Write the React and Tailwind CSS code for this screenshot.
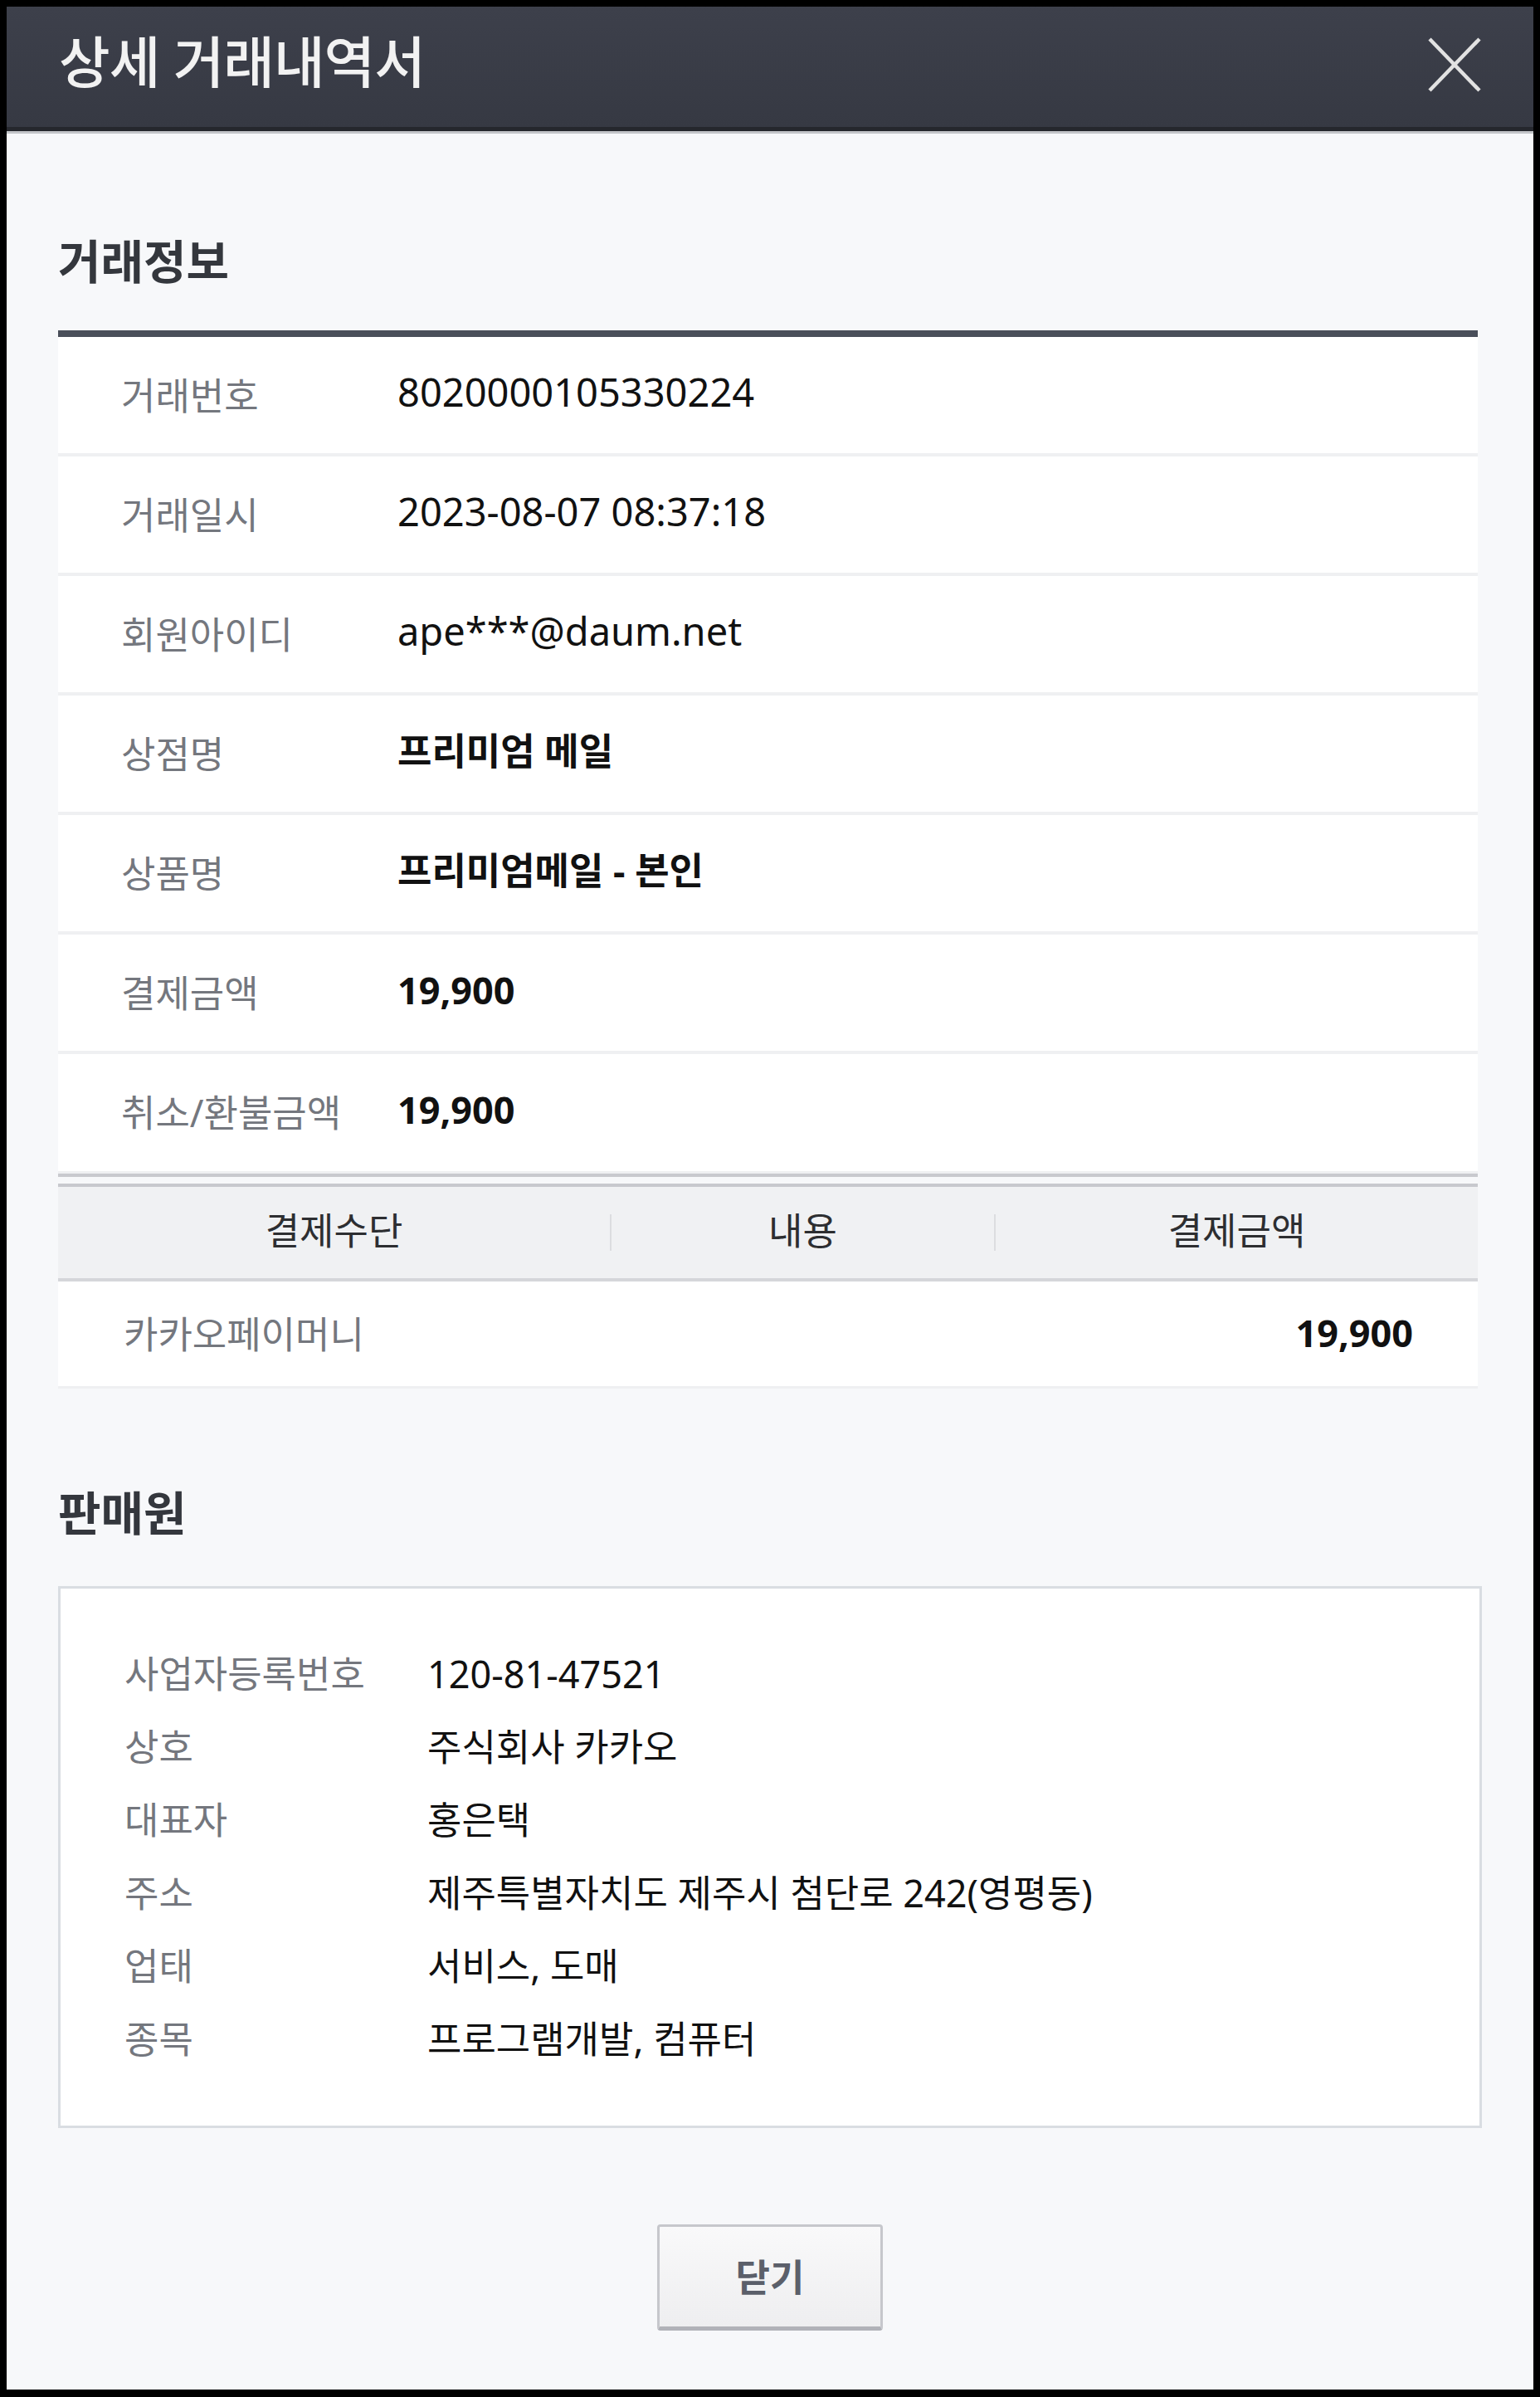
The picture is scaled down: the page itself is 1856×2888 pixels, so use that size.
import React from "react";

const info = [
  { label: "거래번호", value: "8020000105330224", kind: "latin" },
  { label: "거래일시", value: "2023-08-07 08:37:18", kind: "latin" },
  { label: "회원아이디", value: "ape***@daum.net", kind: "latin" },
  { label: "상점명", value: "프리미엄 메일", kind: "kbold" },
  { label: "상품명", value: "프리미엄메일 - 본인", kind: "kbold" },
  { label: "결제금액", value: "19,900", kind: "num" },
  { label: "취소/환불금액", value: "19,900", kind: "num" },
];

const seller = [
  ["사업자등록번호", "120-81-47521"],
  ["상호", "주식회사 카카오"],
  ["대표자", "홍은택"],
  ["주소", "제주특별자치도 제주시 첨단로 242(영평동)"],
  ["업태", "서비스, 도매"],
  ["종목", "프로그램개발, 컴퓨터"],
];

function valueClass(kind) {
  if (kind === "latin") return "text-[47px] text-[#111111]";
  if (kind === "kbold") return "text-[45px] font-bold text-[#111111]";
  return "text-[45px] font-bold text-[#111111]";
}

export default function App() {
  return (
    <div className="w-[1856px] h-[2888px] border-8 border-black border-b-[9px] flex flex-col bg-[#f7f8fa] font-['Noto_Sans','Noto_Sans_CJK_KR',sans-serif] overflow-hidden">
      {/* Header */}
      <div className="h-[153px] shrink-0 flex flex-col">
        <div className="flex-1 bg-gradient-to-b from-[#3d404b] to-[#363943] flex items-center justify-between pl-[63px] pr-[62px]">
          <h1 className="text-[67px] leading-none text-[#f2f2f2] font-medium tracking-[-1px] -mt-[12px]">상세 거래내역서</h1>
          <svg width="66" height="68" viewBox="0 0 66 68" className="-mt-[6px]">
            <line x1="3" y1="3" x2="63" y2="65" stroke="#e2e2e2" strokeWidth="4.5" />
            <line x1="63" y1="3" x2="3" y2="65" stroke="#e2e2e2" strokeWidth="4.5" />
          </svg>
        </div>
        <div className="h-[5px] bg-[#25272d]" />
        <div className="h-[3px] bg-[#c3c5c9]" />
      </div>

      {/* Body */}
      <div className="flex-1 flex flex-col px-[62px] pt-[118px]">
        <h2 className="h-[70px] flex items-center text-[56px] font-bold text-[#34373d] leading-none">거래정보</h2>

        <div className="mt-[49px] mr-[5px] border-t-8 border-[#4a4f5a] bg-white border-b-4 border-b-[#c8c9ce]">
          {info.map((r) => (
            <div key={r.label} className="h-[144px] flex items-center border-b-4 border-[#eff0f2] last:border-b-[3px]">
              <div className="pl-[76px] w-[409px] shrink-0 text-[45px] text-[#74777e] leading-none">{r.label}</div>
              <div className={"leading-none -mt-[8px] " + valueClass(r.kind)}>{r.value}</div>
            </div>
          ))}
        </div>

        <div className="mt-[8px] mr-[5px] border-t-4 border-[#c8c9ce]">
          <div className="h-[114px] bg-[#f0f1f3] border-b-4 border-[#d5d6da] flex items-center text-[45px] text-[#2d2e31] leading-none">
            <div className="w-[665px] text-center -mt-[6px]">결제수단</div>
            <div className="w-[2px] h-[44px] bg-[#dcdde0]" />
            <div className="w-[461px] text-center -mt-[6px]">내용</div>
            <div className="w-[2px] h-[44px] bg-[#dcdde0]" />
            <div className="flex-1 text-center -mt-[6px]">결제금액</div>
          </div>
          <div className="h-[129px] bg-white border-b-[3px] border-[#eff0f2] flex items-center justify-between pl-[79px] pr-[78px] leading-none">
            <span className="text-[45px] text-[#74777e]">카카오페이머니</span>
            <span className="text-[45px] font-bold text-[#111111] -mt-[4px]">19,900</span>
          </div>
        </div>

        <h2 className="mt-[114px] h-[70px] flex items-center text-[56px] font-bold text-[#34373d] leading-none">판매원</h2>

        <div className="mt-[54px] border-[3px] border-[#d9dde2] bg-white pt-[58px] pb-[61px] pl-[77px]">
          {seller.map(([k, v]) => (
            <div key={k} className="h-[88px] flex items-center leading-none">
              <div className="w-[365px] shrink-0 text-[45px] text-[#74777e]">{k}</div>
              <div className="text-[45px] text-[#111111]">{v}</div>
            </div>
          ))}
        </div>

        <div className="mt-[116px] flex justify-center">
          <button className="w-[272px] h-[128px] rounded-[4px] border-[3px] border-[#c6c7cc] border-b-[5px] border-b-[#b1b2b8] bg-gradient-to-b from-[#f9f9fa] to-[#eeeef0] text-[45px] font-bold text-[#5b5f6a] leading-none flex items-center justify-center">
            닫기
          </button>
        </div>
      </div>
    </div>
  );
}
